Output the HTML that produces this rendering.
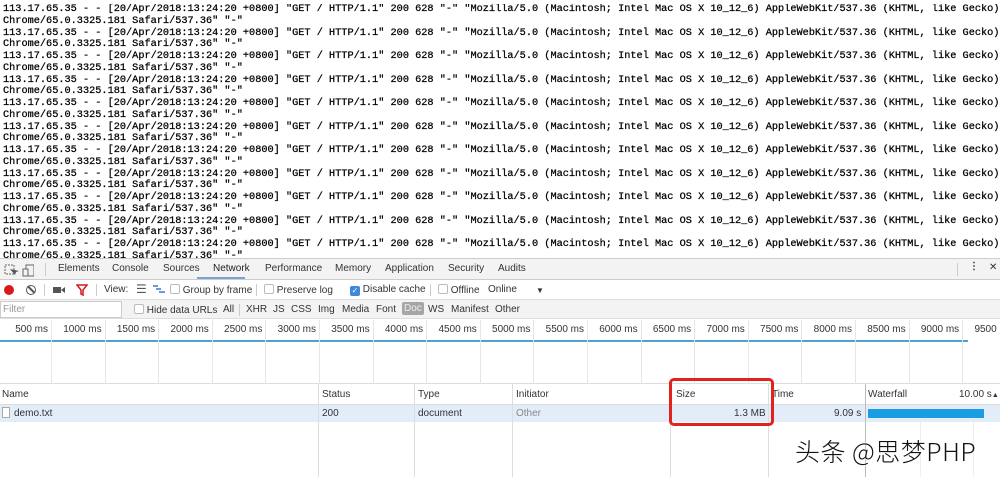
<!DOCTYPE html>
<html><head><meta charset="utf-8"><style>
*{margin:0;padding:0;box-sizing:border-box}
body{width:1000px;height:477px;overflow:hidden;background:#fff;font-family:"Liberation Sans",sans-serif;position:relative}
#log{position:absolute;left:3px;top:4px;width:1000px;height:254px;overflow:hidden;font-family:"Liberation Mono",monospace;font-size:10.25px;line-height:11.75px;white-space:pre;color:#000;-webkit-text-stroke:0.25px #000}
.abs{position:absolute}
.bar{position:absolute;left:0;width:1000px;font-size:10px;color:#333}
.t{position:absolute;top:0;white-space:nowrap}
.vl{position:absolute;width:1px;background:#e4e4e4}
.cb{display:inline-block;width:10px;height:10px;border:1px solid #bbb;border-radius:2px;background:#fff;vertical-align:-1px}
</style></head><body>
<div id="log">113.17.65.35 - - [20/Apr/2018:13:24:20 +0800] "GET / HTTP/1.1" 200 628 "-" "Mozilla/5.0 (Macintosh; Intel Mac OS X 10_12_6) AppleWebKit/537.36 (KHTML, like Gecko)
Chrome/65.0.3325.181 Safari/537.36" "-"
113.17.65.35 - - [20/Apr/2018:13:24:20 +0800] "GET / HTTP/1.1" 200 628 "-" "Mozilla/5.0 (Macintosh; Intel Mac OS X 10_12_6) AppleWebKit/537.36 (KHTML, like Gecko)
Chrome/65.0.3325.181 Safari/537.36" "-"
113.17.65.35 - - [20/Apr/2018:13:24:20 +0800] "GET / HTTP/1.1" 200 628 "-" "Mozilla/5.0 (Macintosh; Intel Mac OS X 10_12_6) AppleWebKit/537.36 (KHTML, like Gecko)
Chrome/65.0.3325.181 Safari/537.36" "-"
113.17.65.35 - - [20/Apr/2018:13:24:20 +0800] "GET / HTTP/1.1" 200 628 "-" "Mozilla/5.0 (Macintosh; Intel Mac OS X 10_12_6) AppleWebKit/537.36 (KHTML, like Gecko)
Chrome/65.0.3325.181 Safari/537.36" "-"
113.17.65.35 - - [20/Apr/2018:13:24:20 +0800] "GET / HTTP/1.1" 200 628 "-" "Mozilla/5.0 (Macintosh; Intel Mac OS X 10_12_6) AppleWebKit/537.36 (KHTML, like Gecko)
Chrome/65.0.3325.181 Safari/537.36" "-"
113.17.65.35 - - [20/Apr/2018:13:24:20 +0800] "GET / HTTP/1.1" 200 628 "-" "Mozilla/5.0 (Macintosh; Intel Mac OS X 10_12_6) AppleWebKit/537.36 (KHTML, like Gecko)
Chrome/65.0.3325.181 Safari/537.36" "-"
113.17.65.35 - - [20/Apr/2018:13:24:20 +0800] "GET / HTTP/1.1" 200 628 "-" "Mozilla/5.0 (Macintosh; Intel Mac OS X 10_12_6) AppleWebKit/537.36 (KHTML, like Gecko)
Chrome/65.0.3325.181 Safari/537.36" "-"
113.17.65.35 - - [20/Apr/2018:13:24:20 +0800] "GET / HTTP/1.1" 200 628 "-" "Mozilla/5.0 (Macintosh; Intel Mac OS X 10_12_6) AppleWebKit/537.36 (KHTML, like Gecko)
Chrome/65.0.3325.181 Safari/537.36" "-"
113.17.65.35 - - [20/Apr/2018:13:24:20 +0800] "GET / HTTP/1.1" 200 628 "-" "Mozilla/5.0 (Macintosh; Intel Mac OS X 10_12_6) AppleWebKit/537.36 (KHTML, like Gecko)
Chrome/65.0.3325.181 Safari/537.36" "-"
113.17.65.35 - - [20/Apr/2018:13:24:20 +0800] "GET / HTTP/1.1" 200 628 "-" "Mozilla/5.0 (Macintosh; Intel Mac OS X 10_12_6) AppleWebKit/537.36 (KHTML, like Gecko)
Chrome/65.0.3325.181 Safari/537.36" "-"
113.17.65.35 - - [20/Apr/2018:13:24:20 +0800] "GET / HTTP/1.1" 200 628 "-" "Mozilla/5.0 (Macintosh; Intel Mac OS X 10_12_6) AppleWebKit/537.36 (KHTML, like Gecko)
Chrome/65.0.3325.181 Safari/537.36" "-"</div>

<div class="bar" style="top:258px;height:22px;background:#f3f3f3;border-top:1px solid #ccc;border-bottom:1px solid #ccc">
 <svg class="abs" style="left:4px;top:5px" width="30" height="13"><rect x="1" y="1" width="9" height="9" fill="none" stroke="#666" stroke-dasharray="2 1"/><path d="M6 5l5 6 1-3 3-1z" fill="#555"/><rect x="22" y="1" width="8" height="11" fill="none" stroke="#666"/><rect x="19" y="5" width="5" height="7" fill="#f3f3f3" stroke="#666"/></svg>
 <div class="vl" style="left:45px;top:4px;height:13px;background:#ccc"></div>
 <span class="t" style="left:58px;top:4px">Elements</span>
 <span class="t" style="left:112px;top:4px">Console</span>
 <span class="t" style="left:163px;top:4px">Sources</span>
 <span class="t" style="left:213px;top:4px;color:#222">Network</span>
 <div class="abs" style="left:197px;top:18px;width:48px;height:2px;background:#7aa2d6"></div>
 <span class="t" style="left:265px;top:4px">Performance</span>
 <span class="t" style="left:335px;top:4px">Memory</span>
 <span class="t" style="left:385px;top:4px">Application</span>
 <span class="t" style="left:448px;top:4px">Security</span>
 <span class="t" style="left:498px;top:4px">Audits</span>
 <div class="vl" style="left:957px;top:4px;height:13px;background:#ccc"></div>
 <span class="t" style="left:969px;top:2px;font-weight:bold">⋮</span>
 <span class="t" style="left:989px;top:3px">✕</span>
</div>
<div class="bar" style="top:280px;height:20px;background:#fff;border-bottom:1px solid #ddd">
 <div class="abs" style="left:4px;top:5px;width:10px;height:10px;border-radius:50%;background:#d7191c"></div>
 <div class="abs" style="left:26px;top:5px;width:10px;height:10px;border-radius:50%;border:1.5px solid #555"><div style="position:absolute;left:3px;top:-1px;width:1.5px;height:9px;background:#555;transform:rotate(-45deg)"></div></div>
 <div class="vl" style="left:44px;top:4px;height:12px;background:#ccc"></div>
 <div class="abs" style="left:53px;top:7px;width:8px;height:6px;background:#555"></div><div class="abs" style="left:61px;top:7px;border:3px solid transparent;border-right:4px solid #555;border-left:0"></div>
 <svg class="abs" style="left:76px;top:4px" width="12" height="12"><path d="M1 1h10L7 6v5L5 10V6z" fill="none" stroke="#d7191c" stroke-width="1.5"/></svg>
 <div class="vl" style="left:96px;top:4px;height:12px;background:#ccc"></div>
 <span class="t" style="left:104px;top:4px">View:</span>
 <span class="t" style="left:136px;top:2px;font-size:12px;color:#555">☰</span>
 <svg class="abs" style="left:153px;top:5px" width="12" height="10"><path d="M0 1h5M3 4h5M6 7h6" stroke="#3879d9" stroke-width="1.5"/></svg>
 <span class="t" style="left:170px;top:4px"><span class="cb"></span> Group by frame</span>
 <div class="vl" style="left:256px;top:4px;height:12px;background:#ccc"></div>
 <span class="t" style="left:264px;top:4px"><span class="cb"></span> Preserve log</span>
 <span class="t" style="left:350px;top:4px"><span class="cb" style="background:#3c8ad9;border-color:#3c8ad9;color:#fff;font-size:8px;line-height:8px;text-align:center">✓</span> Disable cache</span>
 <div class="vl" style="left:430px;top:4px;height:12px;background:#ccc"></div>
 <span class="t" style="left:438px;top:4px"><span class="cb"></span> Offline</span>
 <span class="t" style="left:488px;top:4px">Online</span>
 <span class="t" style="left:536px;font-size:8px;top:6px">▼</span>
</div>
<div class="bar" style="top:300px;height:19px;background:#f3f3f3;border-bottom:1px solid #ddd">
 <div class="abs" style="left:0;top:1px;width:122px;height:17px;background:#fff;border:1px solid #ccc;color:#999;padding:2px 2px">Filter</div>
 <span class="t" style="left:134px;top:4px"><span class="cb"></span> Hide data URLs</span>
 <span class="t" style="left:223px;top:4px">All</span>
 <div class="vl" style="left:239px;top:4px;height:12px;background:#ccc"></div>
 <span class="t" style="left:246px;top:4px">XHR</span>
 <span class="t" style="left:273px;top:4px">JS</span>
 <span class="t" style="left:291px;top:4px">CSS</span>
 <span class="t" style="left:318px;top:4px">Img</span>
 <span class="t" style="left:342px;top:4px">Media</span>
 <span class="t" style="left:376px;top:4px">Font</span>
 <span class="t" style="left:402px;top:2px;background:#a6a6a6;color:#eee;padding:1px 2px;border-radius:2px">Doc</span>
 <span class="t" style="left:428px;top:4px">WS</span>
 <span class="t" style="left:451px;top:4px">Manifest</span>
 <span class="t" style="left:495px;top:4px">Other</span>
</div>
<div class="bar" style="top:320px;height:64px;background:#fff;border-bottom:1px solid #ddd" id="ov">
 <div class="abs" style="left:0;top:20px;width:968px;height:2px;background:#4fa3cf"></div>
</div>
<div class="bar" style="top:384px;height:21px;background:#fff;border-bottom:1px solid #ddd">
 <span class="t" style="left:2px;top:5px">Name</span>
 <span class="t" style="left:322px;top:5px">Status</span>
 <span class="t" style="left:418px;top:5px">Type</span>
 <span class="t" style="left:516px;top:5px">Initiator</span>
 <span class="t" style="left:676px;top:5px">Size</span>
 <span class="t" style="left:772px;top:5px">Time</span>
 <span class="t" style="left:868px;top:5px">Waterfall</span>
 <span class="t" style="left:959px;top:5px">10.00 s<span style="font-size:7px">▲</span></span>
</div>
<div class="bar" style="top:405px;height:17px;background:#e3edfa">
 <div class="abs" style="left:2px;top:2px;width:8px;height:11px;border:1px solid #aaa;background:#fff"></div>
 <span class="t" style="left:14px;top:3px">demo.txt</span>
 <span class="t" style="left:322px;top:3px">200</span>
 <span class="t" style="left:418px;top:3px">document</span>
 <span class="t" style="left:516px;top:3px;color:#888">Other</span>
 <span class="t" style="left:734px;top:3px">1.3 MB</span>
 <span class="t" style="left:834px;top:3px">9.09 s</span>
 <div class="abs" style="left:868px;top:4px;width:116px;height:9px;background:#1a9ee3"></div>
</div>
<div id="cols"></div>
<div class="abs" style="left:669px;top:378px;width:105px;height:48px;border:3px solid #e0241d;border-radius:5px"></div>
<div class="abs" style="left:795px;top:433px;font-family:'Noto Sans CJK SC',sans-serif;font-size:25px;font-weight:300;color:#111;text-shadow:0 0 2px #fff,0 0 2px #fff;white-space:nowrap;letter-spacing:0.5px">头条 @思梦PHP</div>
<script>
var ov=document.getElementById('ov'),h='';
for(var i=0;i<19;i++){var x=51+i*53.6;h+='<div class="vl" style="left:'+x+'px;top:0;height:64px;background:#e6e6e6"></div>';
h+='<span class="t" style="left:'+(x-50)+'px;width:47px;text-align:right;top:4px">'+((i+1)*500)+' ms</span>';}
ov.innerHTML+=h;
var c='',xs=[318,414,512,670,768,865];
xs.forEach(function(x){c+='<div class="vl" style="left:'+x+'px;top:384px;height:93px;background:'+(x==865?'#bbb':'#ddd')+'"></div>';});
[920,973].forEach(function(x){c+='<div class="vl" style="left:'+x+'px;top:422px;height:55px;background:#eee"></div>';});
document.getElementById('cols').innerHTML=c;
</script>
</body></html>
